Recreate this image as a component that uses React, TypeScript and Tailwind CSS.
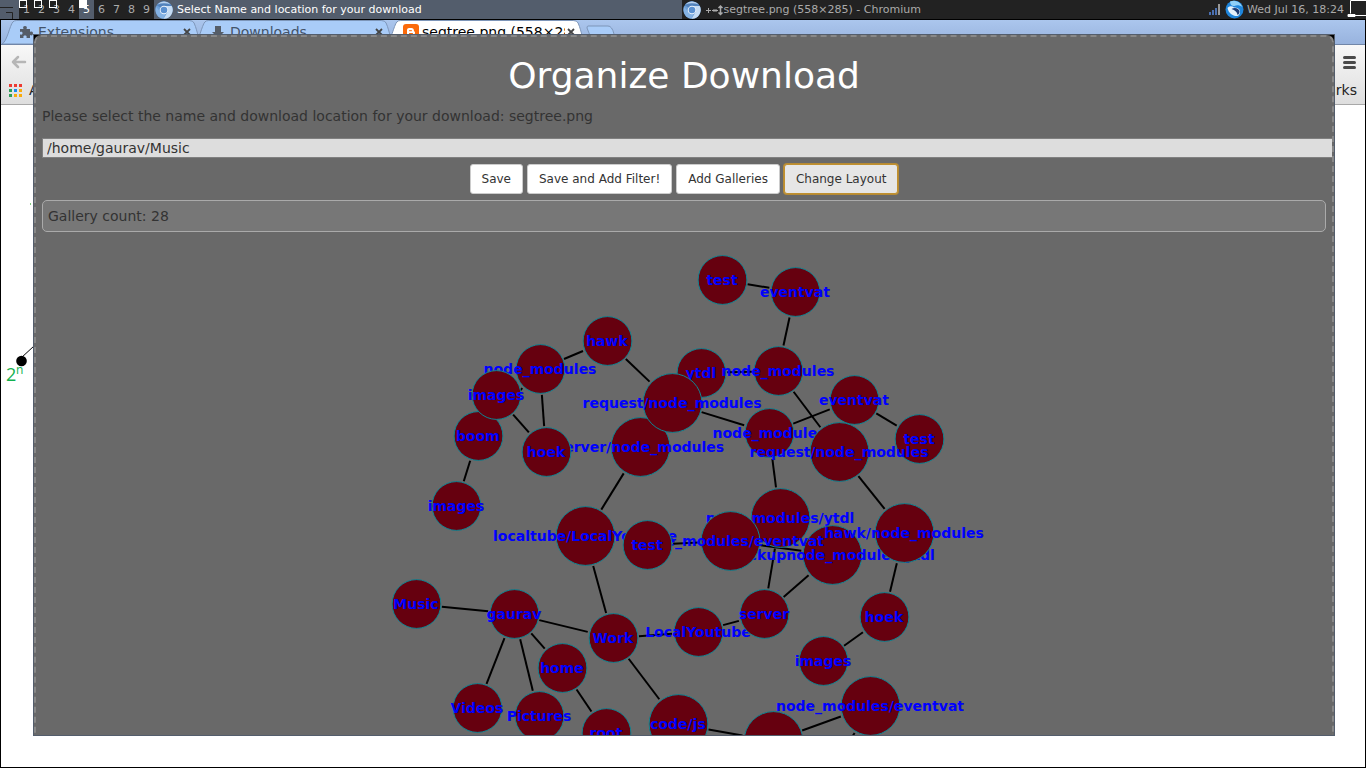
import React from "react";

type GraphNode = { id: string; label: string; x: number; y: number; big?: boolean };

// Listed back to front: later nodes cover earlier ones.
const nodes: GraphNode[] = [
  { id: "test1", label: "test", x: 722, y: 280 },
  { id: "event1", label: "eventvat", x: 795, y: 292 },
  { id: "hawk", label: "hawk", x: 607, y: 341 },
  { id: "nm0", label: "node_modules", x: 540, y: 369 },
  { id: "boom", label: "boom", x: 478, y: 436 },
  { id: "images0", label: "images", x: 496, y: 395 },
  { id: "srvnm", label: "server/node_modules", x: 640, y: 447, big: true },
  { id: "hoek0", label: "hoek", x: 546, y: 452 },
  { id: "images1", label: "images", x: 456, y: 506 },
  { id: "ytdl0", label: "ytdl", x: 701, y: 373 },
  { id: "nm1", label: "node_modules", x: 778, y: 371 },
  { id: "req0", label: "request/node_modules", x: 672, y: 403, big: true },
  { id: "nm2", label: "node_modules", x: 769, y: 433 },
  { id: "event2", label: "eventvat", x: 854, y: 400 },
  { id: "test2", label: "test", x: 919, y: 439 },
  { id: "req1", label: "request/node_modules", x: 839, y: 452, big: true },
  { id: "local", label: "localtube/LocalYoutube", x: 585, y: 536, big: true },
  { id: "ytdl1", label: "node_modules/ytdl", x: 780, y: 518, big: true },
  { id: "ytdl2", label: "backupnode_modules/ytdl", x: 832, y: 555, big: true },
  { id: "event3", label: "node_modules/eventvat", x: 730, y: 541, big: true },
  { id: "hawk1", label: "hawk/node_modules", x: 904, y: 533, big: true },
  { id: "test3", label: "test", x: 647, y: 545 },
  { id: "hoek1", label: "hoek", x: 884, y: 617 },
  { id: "images2", label: "images", x: 823, y: 661 },
  { id: "lyt", label: "LocalYoutube", x: 698, y: 632 },
  { id: "server", label: "server", x: 764, y: 614 },
  { id: "work", label: "Work", x: 613, y: 638 },
  { id: "music", label: "Music", x: 416, y: 604 },
  { id: "gaurav", label: "gaurav", x: 514, y: 614 },
  { id: "videos", label: "Videos", x: 477, y: 708 },
  { id: "pictures", label: "Pictures", x: 539, y: 716 },
  { id: "home", label: "home", x: 562, y: 668 },
  { id: "root", label: "root", x: 606, y: 733 },
  { id: "code", label: "code/js", x: 678, y: 724, big: true },
  { id: "proj", label: "server", x: 773, y: 741, big: true },
  { id: "event4", label: "node_modules/eventvat", x: 870, y: 706, big: true },
  { id: "test4", label: "test", x: 831, y: 774 },
];

const edges: [string, string][] = [
  ["test1", "event1"], ["event1", "nm1"], ["nm1", "ytdl0"], ["nm1", "req1"],
  ["req0", "nm2"], ["nm2", "event2"], ["event2", "test2"], ["nm2", "ytdl1"],
  ["req1", "hawk1"], ["hawk1", "hoek1"], ["hoek1", "images2"], ["hawk", "nm0"],
  ["hawk", "req0"], ["nm0", "boom"], ["nm0", "hoek0"], ["images0", "hoek0"],
  ["boom", "images1"], ["srvnm", "local"], ["local", "work"], ["work", "lyt"],
  ["lyt", "server"], ["server", "ytdl1"], ["server", "ytdl2"], ["event3", "ytdl2"],
  ["test3", "event3"], ["music", "gaurav"], ["gaurav", "work"], ["gaurav", "home"],
  ["gaurav", "videos"], ["gaurav", "pictures"], ["home", "root"], ["work", "code"],
  ["code", "proj"], ["proj", "event4"], ["event4", "test4"],
];

const radius = (n: GraphNode) => (n.big ? 29 : 24);

function Edge({ from, to }: { from: string; to: string }) {
  const a = nodes.find((n) => n.id === from)!;
  const b = nodes.find((n) => n.id === to)!;
  const d = Math.hypot(b.x - a.x, b.y - a.y);
  const ux = (b.x - a.x) / d;
  const uy = (b.y - a.y) / d;
  const ra = radius(a) + 2;
  const rb = radius(b) + 2;
  return (
    <line x1={a.x + ux * ra} y1={a.y + uy * ra} x2={b.x - ux * rb} y2={b.y - uy * rb} stroke="#000" strokeWidth="2" />
  );
}

function Graph() {
  return (
    <svg className="mx-auto block h-full w-[600px] overflow-visible" role="img" aria-label="Gallery graph">
      <g transform="translate(-384 -232)">
        {edges.map(([a, b]) => (
          <Edge key={a + b} from={a} to={b} />
        ))}
        {nodes.map((n) => (
          <g key={n.id}>
            <circle cx={n.x + 0.5} cy={n.y} r={radius(n) + 0.4} fill="#66000f" stroke="#0f8592" strokeWidth="1" />
            <text x={n.x} y={n.y + 5} textAnchor="middle" className="fill-[#0000ff] text-[14px] font-bold">
              {n.label}
            </text>
          </g>
        ))}
      </g>
    </svg>
  );
}

function ChromiumIcon() {
  return (
    <svg viewBox="0 0 18 18" className="size-[18px] shrink-0" aria-hidden="true">
      <circle cx="9" cy="9" r="8.7" fill="#6d9fd6" />
      <path d="M9 9 1.800 4.200A8.700 8.700 0 0 1 16.700 5L9 5z" fill="#5283bd" />
      <path d="M2.500 3.500A8.700 8.700 0 0 1 15.500 3.500Q9 .8 2.500 3.500z" fill="#b9d2ee" />
      <path d="M9 5h7.700A8.700 8.700 0 0 1 8.500 17.700L12.700 11z" fill="#c5dcf4" />
      <path d="M1.200 6A8.700 8.700 0 0 0 8.500 17.700L10.500 13 5.500 11z" fill="#84b2e4" />
      <circle cx="9" cy="9" r="4.300" fill="#eaf2fb" />
      <circle cx="9" cy="9" r="3.300" fill="#5a90d0" />
    </svg>
  );
}

function Tag({ n }: { n: number }) {
  const active = n === 5;
  return (
    <li className={active ? "relative w-[15px] bg-[#535d6c] text-center text-white" : "relative w-[15px] text-center"}>
      {n <= 3 && <span className="absolute top-0 left-0 size-2 border border-white" />}
      {active && <span className="absolute top-0 left-0 size-2 bg-white" />}
      {n}
    </li>
  );
}

function StatusBar() {
  return (
    <header className="flex h-[19px] shrink-0 bg-[#222222] text-[11px] leading-[19px] text-[#aaaaaa]">
      <div className="w-[19px] bg-[#535d6c]">
        <svg viewBox="0 0 19 19" className="size-[19px]" fill="none" stroke="#222" aria-hidden="true">
          <path d="M0 7.500h13M6 12.500h6.500V19" />
        </svg>
      </div>
      <ul className="flex">
        {[1, 2, 3, 4, 5, 6, 7, 8, 9].map((n) => (
          <Tag key={n} n={n} />
        ))}
      </ul>
      <div className="flex flex-1 items-center gap-1 bg-[#535d6c] pl-px text-white">
        <ChromiumIcon />
        <span>Select Name and location for your download</span>
      </div>
      <div className="flex flex-1 items-center gap-1 pl-px">
        <ChromiumIcon />
        <span className="flex items-center">
          <svg viewBox="0 0 19 12" className="h-3 w-[19px]" fill="none" stroke="#aaa" aria-hidden="true">
            <path d="M1 6.500h5M3.500 4v5M7 6.500h6M9 5v3M11 5v3" />
            <path d="M15.500 2v8M13.500 4l2-2 2 2M13.500 8.500l2 2 2-2" strokeWidth="1.500" />
          </svg>
          segtree.png (558×285) - Chromium
        </span>
      </div>
      <svg viewBox="0 0 12 12" className="mt-[3px] mr-1 size-3 shrink-0" aria-hidden="true">
        <path d="M0 9h2v3H0zM3 7h2v5H3zM6 5h2v7H6z" fill="#4a6fb0" />
        <path d="M9 1h2v11H9z" fill="#999" />
      </svg>
      <svg viewBox="0 0 19 19" className="mr-[3px] size-[19px] shrink-0" aria-hidden="true">
        <circle cx="9.500" cy="9.500" r="9" fill="#1f86dc" />
        <path d="M5 1.500c5-2 10 0 12.500 5.500-3-2-6-2-8-1-3 0-4-1-4.500-4.500z" fill="#8fd0f8" />
        <path d="M2.500 8C4 6 7 5.500 9 7.500c3 0 6 1 6 4.500 0 2-1 3.500-2.500 4-4 .5-9-2.500-10-8z" fill="#e4f1fb" />
        <path d="M6.500 9c3-2 7.500-1 8 2.500 0 2-1 3-2 3.500 0-2.500-2.500-5-6-6z" fill="#1d3c74" />
      </svg>
      <time className="text-[11px]">Wed Jul 16, 18:24</time>
      <svg viewBox="0 0 19 19" className="ml-[3px] size-[19px] shrink-0" fill="none" stroke="#fff" aria-hidden="true">
        <path d="M19 .5H3.500v13M7 15.500h12" />
        <path d="M1 14.500h7v2H1z" fill="#fff" />
      </svg>
    </header>
  );
}

function Tab({ title, icon, active }: { title: string; icon: React.ReactNode; active?: boolean }) {
  return (
    <div className="relative flex h-6 w-[192px] shrink-0 items-center pl-[18px]">
      <svg viewBox="0 0 206 24" preserveAspectRatio="none" className="absolute top-0 left-0 h-6 w-[204px]" aria-hidden="true">
        <path d="M1 24 C6 22 9 5 12 2 Q13 .5 16 .5 H190 Q194 .5 195 3 C199 12 199 22 205 24z" fill={active ? "#fff" : "#a9ccf8"} stroke="#7d95b8" />
      </svg>
      <span className="relative w-[19px] shrink-0">{icon}</span>
      <span className="relative flex-1 overflow-hidden text-[14px] leading-5 whitespace-nowrap">{title}</span>
      <button aria-label={"Close " + title} className="relative size-3 shrink-0">
        <svg viewBox="0 0 12 12" className="size-3" stroke="#444" strokeWidth="1.800" aria-hidden="true">
          <path d="M3 3l6 6M9 3l-6 6" />
        </svg>
      </button>
    </div>
  );
}

function Browser() {
  const dots = ["#ed3b32", "#ed3b32", "#ed3b32", "#2e9e57", "#1b8bf0", "#f9ab0b", "#2e9e57", "#f9ab0b", "#f9ab0b"];
  return (
    <section className="flex flex-1 flex-col border border-black bg-white">
      <div className="flex h-[25px] shrink-0 border-b border-[#7186a8] bg-linear-to-b from-[#abc6ed] to-[#98b3de] text-[#44546a]">
        <Tab
          title="Extensions"
          icon={
            <svg viewBox="0 0 14 14" className="size-[14px]" fill="#555d68" aria-hidden="true">
              <path d="M1 4h3.500c-1-2 0-3 1.500-3s2.500 1 1.500 3H11v3c2-1 3 0 3 1.500S13 11 11 10v3H7.500c.5-2-.2-2.500-1.500-2.500S4 11 4.500 13H1V9.500c2 .5 2.500-.2 2.500-1.300S3 6.500 1 7z" />
            </svg>
          }
        />
        <Tab
          title="Downloads"
          icon={
            <svg viewBox="0 0 14 14" className="size-[14px]" fill="#555d68" aria-hidden="true">
              <path d="M4 1h6v6h3l-6 6-6-6h3z" />
            </svg>
          }
        />
        <div className="flex text-black">
          <Tab
            active
            title="segtree.png (558×285)"
            icon={
              <svg viewBox="0 0 16 16" className="size-4" aria-hidden="true">
                <rect width="16" height="16" rx="3" fill="#fb6a0a" />
                <path d="M6 4h2.500C10 4 11 5 11 7c0 .5 1 .5 1 1.500C12 11 11 12 9 12H6c-1.300 0-2-1-2-2V6c0-1.300 1-2 2-2z" fill="#fff" />
                <path d="M6.500 6.700h2M6.500 9.500h3" stroke="#fb6a0a" strokeLinecap="round" />
              </svg>
            }
          />
        </div>
        <svg viewBox="0 0 32 18" className="mt-[5px] ml-2 h-[18px] w-8" aria-hidden="true">
          <path d="M3 1h20q4 0 6 8t4 8H10q-3 0-4-4L2 3q0-2 1-2z" fill="#a9ccf8" stroke="#7d95b8" />
        </svg>
      </div>
      <div className="flex h-[60px] shrink-0 flex-col justify-between border-b border-[#a8a8a8] bg-linear-to-b from-[#f8f8f8] to-[#dedede] px-2 pt-2 pb-1">
        <div className="flex items-center justify-between">
          <svg viewBox="0 0 18 18" className="size-[18px]" fill="none" stroke="#b6b6b6" strokeWidth="2.500" strokeLinecap="round" strokeLinejoin="round" aria-hidden="true">
            <path d="M16 9H4M9 4 4 9l5 5" />
          </svg>
          <button aria-label="Menu" className="mr-px flex w-[13px] flex-col gap-[2px]">
            <span className="h-[3px] rounded-xs bg-[#4a4a4a]" />
            <span className="h-[3px] rounded-xs bg-[#4a4a4a]" />
            <span className="h-[3px] rounded-xs bg-[#4a4a4a]" />
          </button>
        </div>
        <div className="flex items-center justify-between text-[14px] leading-5 text-[#222]">
          <a href="#apps" className="flex items-center gap-[7px]">
            <span className="grid grid-cols-3 gap-[2px]">
              {dots.map((c, i) => (
                <span key={i} className="size-[3px]" style={{ backgroundColor: c }} />
              ))}
            </span>
            Apps
          </a>
          <a href="#bookmarks">Other bookmarks</a>
        </div>
      </div>
      <svg className="mt-[95px] h-[190px] w-[33px]" viewBox="1 200 33 190" aria-hidden="true">
        <path d="M30 204h1" stroke="#090" />
        <path d="M21 358 34 346" stroke="#000" />
        <circle cx="21.500" cy="361" r="5.300" />
        <text x="6" y="381" className="fill-[#12b04e] text-[18px] [font-family:'Open_Sans',sans-serif]">2</text>
        <text x="16" y="374" className="fill-[#12b04e] text-[12px] [font-family:'Open_Sans',sans-serif]">n</text>
      </svg>
    </section>
  );
}

const buttonClass = "rounded-[3px] border border-[#cccccc] bg-white px-[11px] py-[5px] text-[12px] leading-[18px]";

function OrganizeDialog() {
  return (
    <main className="absolute top-[34px] right-[31px] bottom-8 left-[33px] flex flex-col overflow-hidden border border-[#535d6c] bg-black">
      <div className="flex min-h-0 flex-1 flex-col rounded-t-[7px] border-2 border-b-0 border-dashed border-[#888888] bg-[#696969] pl-[6px] text-[14px] leading-5 text-[#333333]">
        <h1 className="mt-[19px] pr-[6px] text-center text-[36px] leading-10 text-white">Organize Download</h1>
        <label htmlFor="path" className="mt-[10px]">
          Please select the name and download location for your download: segtree.png
        </label>
        <input
          id="path"
          defaultValue="/home/gaurav/Music"
          className="mt-3 h-5 border border-r-0 border-[#808080] bg-[#dddddd] px-1 text-[14px] leading-[18px] outline-none"
        />
        <div className="mt-[6px] flex justify-center gap-1 pr-[6px]">
          <button className={buttonClass}>Save</button>
          <button className={buttonClass}>Save and Add Filter!</button>
          <button className={buttonClass}>Add Galleries</button>
          <button className="rounded-[3px] border border-[#c0902f] bg-[#e6e6e6] px-[11px] py-[5px] text-[12px] leading-[18px] ring-1 ring-[#b58a35]">
            Change Layout
          </button>
        </div>
        <div className="mt-[6px] mr-[6px] rounded-[5px] border border-[#aaaaaa] bg-[#777777] px-[5px] py-[5px]">Gallery count: 28</div>
        <div className="min-h-0 flex-1 pr-[6px]">
          <Graph />
        </div>
      </div>
    </main>
  );
}

export default function App() {
  return (
    <div className="relative flex min-h-screen flex-col overflow-hidden [font-family:'DejaVu_Sans',sans-serif]">
      <StatusBar />
      <Browser />
      <OrganizeDialog />
    </div>
  );
}
